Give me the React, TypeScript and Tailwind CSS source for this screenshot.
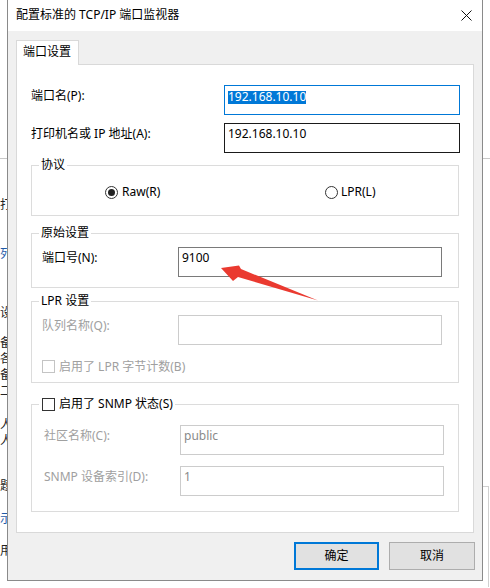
import React from "react";

const FONT = "font-['Noto_Sans','Noto_Sans_CJK_SC',sans-serif]";

function TextBox({ value, tone = "normal", selected = false, width = "w-[264px]" }: { value?: string; tone?: "focus" | "hover" | "normal" | "disabled"; selected?: boolean; width?: string }) {
  const border =
    tone === "focus" ? "border-[#0078d7]" : tone === "hover" ? "border-[#1a1a1a]" : tone === "disabled" ? "border-[#cccccc]" : "border-[#7a7a7a]";
  const text = tone === "disabled" ? "text-[#8a8a8a]" : "text-black";
  return (
    <div className={`${width} h-[30px] shrink-0 border ${border} bg-white px-[3px] pt-[2px] text-[12px] leading-[16px] ${text}`}>
      {selected ? <span className="mt-[3px] inline-block h-[13px] bg-[#0078d7] align-top leading-[12px] text-white">{value}</span> : value}
    </div>
  );
}

function Group({ title, className, children }: { title: React.ReactNode; className: string; children?: React.ReactNode }) {
  return (
    <div className={`relative w-[428px] border border-[#dcdcdc] ${className}`}>
      <div className="absolute -top-[9px] left-[7px] flex items-center bg-white px-[2px] text-[12px] leading-[16px] text-black">{title}</div>
      {children}
    </div>
  );
}

function Checkbox({ disabled = false }: { disabled?: boolean }) {
  return <span className={`inline-block size-[13px] border bg-white ${disabled ? "border-[#c4c4c4]" : "border-[#333333]"}`} />;
}

function Radio({ checked = false }: { checked?: boolean }) {
  return (
    <span className="flex size-[13px] items-center justify-center rounded-full border border-[#333333] bg-white">
      {checked && <span className="size-[7px] rounded-full bg-[#222222]" />}
    </span>
  );
}

function Field({ label, value, disabled = false, className = "" }: { label: string; value?: string; disabled?: boolean; className?: string }) {
  return (
    <div className={`flex items-start ${className}`}>
      <div className={`w-[136px] pt-[3px] text-[12px] leading-[16px] ${disabled ? "text-[#a0a0a0]" : "text-black"}`}>{label}</div>
      <TextBox value={value} tone={disabled ? "disabled" : "normal"} />
    </div>
  );
}

// clipped glimpse of the window behind the dialog
function BackdropStrip() {
  return (
    <div className="flex w-[7px] shrink-0 flex-col overflow-hidden text-[12px] leading-[16px] whitespace-nowrap text-[#222]">
      <div className="mt-[158px] h-px w-full shrink-0 bg-[#c8c8c8]" />
      <div className="mt-[38px] h-4 shrink-0">打印</div>
      <div className="mt-[33px] h-4 shrink-0 text-[#1f5aa8]">列表</div>
      <div className="mt-[43px] h-4 shrink-0">设置</div>
      <div className="mt-[14px] h-4 shrink-0">备注</div>
      <div className="h-4 shrink-0">各项</div>
      <div className="h-4 shrink-0">备注</div>
      <div className="h-4 shrink-0">二</div>
      <div className="mt-[18px] h-4 shrink-0">人员</div>
      <div className="h-4 shrink-0">人员</div>
      <div className="mt-[29px] h-4 shrink-0">题目</div>
      <div className="mt-[17px] h-4 shrink-0 text-[#1f5aa8]">示例</div>
      <div className="mt-[16px] h-4 shrink-0">用户</div>
    </div>
  );
}

export default function App() {
  return (
    <div className={`relative flex h-[588px] w-[490px] overflow-hidden bg-white ${FONT}`}>
      <BackdropStrip />

      <div className="flex h-[581px] w-[476px] shrink-0 flex-col border border-t-0 border-[#8a8a8a] bg-[#f0f0f0]">
        <div className="flex h-[31px] shrink-0 items-center justify-between bg-white pl-[8px] pr-[9px] text-[12px] text-black">
          <span className="-mt-[1px]">配置标准的 TCP/IP 端口监视器</span>
          <svg width="11" height="11" viewBox="0 0 11 11" className="mr-[1px]">
            <path d="M0.5 0.5 L10.5 10.5 M10.5 0.5 L0.5 10.5" stroke="#111" strokeWidth="1" fill="none" />
          </svg>
        </div>

        <div className="flex flex-1 flex-col pl-[8px] pt-[9px]">
          <div className="relative z-10 -mb-px flex h-[25px] w-[63px] items-start border border-b-0 border-[#d9d9d9] bg-white pl-[6px] pt-[3px] text-[12px] leading-[16px] text-black">
            端口设置
          </div>

          <div className="flex h-[469px] w-[458px] flex-col border border-[#d9d9d9] bg-white pl-[14px] pr-[13px] pt-[20px]">
            <div className="flex items-start">
              <div className="w-[193px] pt-[3px] text-[12px] leading-[16px] text-black">端口名(P):</div>
              <TextBox value="192.168.10.10" tone="focus" selected width="w-[236px]" />
            </div>
            <div className="mt-[8px] flex items-start">
              <div className="w-[193px] pt-[3px] text-[12px] leading-[16px] text-black">打印机名或 IP 地址(A):</div>
              <TextBox value="192.168.10.10" tone="hover" width="w-[236px]" />
            </div>

            <Group title="协议" className="mt-[12px] h-[51px]">
              <div className="flex items-center pl-[73px] pt-[18px] text-[12px] leading-[16px] text-black">
                <div className="flex w-[220px] items-center gap-[4px]">
                  <Radio checked />
                  <span>Raw(R)</span>
                </div>
                <div className="flex items-center gap-[3px]">
                  <Radio />
                  <span>LPR(L)</span>
                </div>
              </div>
            </Group>

            <Group title="原始设置" className="mt-[17px] pb-[10px] pl-[10px] pt-[13px]">
              <Field label="端口号(N):" value="9100" />
            </Group>

            <Group title="LPR 设置" className="mt-[13px] pb-[9px] pl-[10px] pt-[13px]">
              <Field label="队列名称(Q):" disabled />
              <div className="mt-[15px] flex items-center gap-[4px] text-[12px] leading-[13px] text-[#a0a0a0]">
                <Checkbox disabled />
                <span>启用了 LPR 字节计数(B)</span>
              </div>
            </Group>

            <Group
              title={
                <span className="flex items-center gap-[4px] pl-[1px]">
                  <Checkbox />
                  <span>启用了 SNMP 状态(S)</span>
                </span>
              }
              className="mt-[21px] pb-[15px] pl-[12px] pt-[20px]"
            >
              <Field label="社区名称(C):" value="public" disabled className="-ml-[2px] pl-[2px]" />
              <Field label="SNMP 设备索引(D):" value="1" disabled className="mt-[11px] -ml-[2px] pl-[2px]" />
            </Group>
          </div>

          <div className="mt-[9px] flex justify-end gap-[10px] pr-[7px]">
            <button className="flex h-[28px] w-[85px] items-center justify-center border-2 border-[#0078d7] bg-[#e1e1e1] text-[12px] text-black">
              确定
            </button>
            <button className="flex h-[28px] w-[86px] items-center justify-center border border-[#adadad] bg-[#e1e1e1] text-[12px] text-black">
              取消
            </button>
          </div>
        </div>
      </div>

      <div className="relative flex w-[7px] shrink-0 flex-col">
        <div className="mt-[158px] h-px w-full bg-[#c8c8c8]" />
        <div className="mt-[327px] h-px w-[6px] bg-[#d0d0d0]" />
        <div className="ml-[5px] h-[100px] w-px bg-[#d0d0d0]" />
      </div>

      {/* annotation arrow drawn over the dialog */}
      <svg className="pointer-events-none absolute left-0 top-0" width="490" height="588" viewBox="0 0 490 588">
        <polygon points="221,268 239,265.5 241,269 318,300.5 238,277 233,281" fill="#ea3a30" />
      </svg>
    </div>
  );
}
